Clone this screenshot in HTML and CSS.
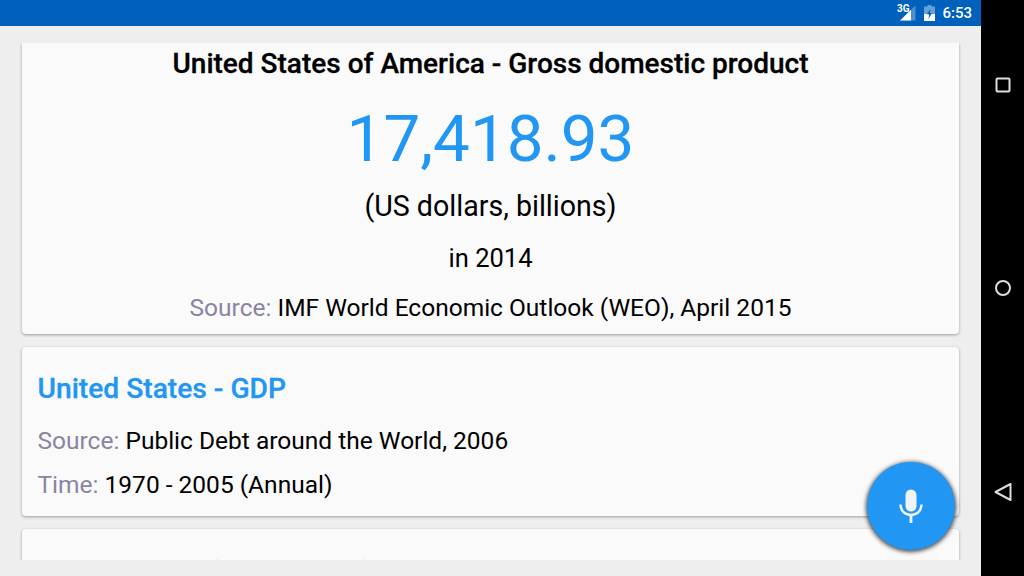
FILE: index.html
```html
<!DOCTYPE html>
<html lang="en">
<head>
    <meta charset="UTF-8">
    <title>GDP search</title>
    <link rel="stylesheet" href="styles.css">
</head>
<body>
    <div class="screen">
        <div class="status-bar">
            <svg class="icon-signal" width="17" height="16" viewBox="0 0 17 16">
                <path d="M16.500 0.500V15.500H1z" fill="#fff" fill-opacity="0.3"/>
                <path d="M12 5V15.500H1z" fill="#fff"/>
            </svg>
            <span class="network">3G</span>
            <svg class="icon-battery" width="11" height="16" viewBox="0 0 11 16">
                <path d="M3.500 0h4v1.500H11V16H0V1.500h3.500z" fill="#fff" fill-opacity="0.4"/>
                <path d="M0 9h11v7H0z" fill="#fff"/>
                <path d="M6.500 3.500 3 9.500h2.200L4.500 14 8 8H5.800z" fill="#0061bc"/>
            </svg>
            <span class="clock">6:53</span>
        </div>

        <div class="results">
            <div class="card card-main">
                <h1 class="main-title">United States of America - Gross domestic product</h1>
                <div class="main-value">17,418.93</div>
                <div class="main-unit">(US dollars, billions)</div>
                <div class="main-year">in 2014</div>
                <div class="main-source"><span class="label">Source:</span> IMF World Economic Outlook (WEO), April 2015</div>
            </div>
            <div class="card card-result">
                <h2 class="result-title">United States - GDP</h2>
                <p class="result-line"><span class="label">Source:</span> Public Debt around the World, 2006</p>
                <p class="result-line"><span class="label">Time:</span> 1970 - 2005 (Annual)</p>
            </div>
            <div class="card card-result card-partial">
                <h2 class="result-title">Ratio of Debt (World Bank)</h2>
            </div>
        </div>

        <button class="fab">
            <svg width="24" height="36" viewBox="0 0 24 36">
                <rect x="6.500" y="0.500" width="11" height="22" rx="5.500" fill="#f1f3f5"/>
                <path d="M1.500 15.500c0 6.500 4.800 10.500 10.500 10.500s10.500-4 10.500-10.500" fill="none" stroke="#f1f3f5" stroke-width="2.400"/>
                <path d="M12 25v9" stroke="#f1f3f5" stroke-width="2.800"/>
            </svg>
        </button>
    </div>

    <div class="nav-bar">
        <svg width="18" height="18" viewBox="0 0 18 18"><rect x="2.500" y="2.500" width="13" height="13" rx="1" fill="none" stroke="#ddd" stroke-width="2"/></svg>
        <svg width="20" height="20" viewBox="0 0 20 20"><circle cx="10" cy="10" r="7" fill="none" stroke="#ddd" stroke-width="2"/></svg>
        <svg width="20" height="22" viewBox="0 0 20 22"><path d="M17.500 3v16L2.500 11z" fill="none" stroke="#ddd" stroke-width="2" stroke-linejoin="round"/></svg>
    </div>
</body>
</html>
```

FILE: styles.css
```css
html, body {
    margin: 0;
    height: 100%;
    overflow: hidden;
}
body {
    display: flex;
    width: 1024px;
    height: 576px;
    font-family: Roboto, sans-serif;
    background-color: #000;
}
.screen {
    position: relative;
    flex: 1;
    display: flex;
    flex-direction: column;
    background-color: #eeeeee;
}
.status-bar {
    height: 26px;
    flex: none;
    display: flex;
    align-items: center;
    justify-content: flex-end;
    padding-right: 9px;
    background-color: #0061bc;
    color: #fff;
}
.icon-signal {
    margin-right: 8px;
}
.network {
    position: absolute;
    top: 3px;
    left: 897px;
    font-size: 10px;
    font-weight: 700;
}
.icon-battery {
    margin-right: 7px;
}
.clock {
    font-size: 15px;
    font-weight: 500;
}
.results {
    height: 517px;
    margin-top: 17px;
    padding: 0 22px;
    overflow: hidden;
}
.card {
    background-color: #fafafa;
    border-radius: 4px;
    box-shadow: 0 1px 3px rgba(0, 0, 0, 0.35);
    margin-bottom: 13px;
}
.card-main {
    height: 291px;
    border-radius: 0 0 4px 4px;
    text-align: center;
    color: #000;
}
.main-title {
    margin: 0;
    padding-top: 3px;
    font-size: 28px;
    line-height: 36px;
    font-weight: 500;
    -webkit-text-stroke: 0.3px #000;
}
.main-value {
    margin-top: 18px;
    font-size: 65.500px;
    line-height: 78px;
    font-weight: 400;
    color: #2196f3;
}
.main-unit {
    margin-top: 10px;
    font-size: 28.600px;
    line-height: 36px;
}
.main-year {
    margin-top: 17px;
    font-size: 25.500px;
    line-height: 34px;
}
.main-source {
    margin-top: 16px;
    font-size: 24.500px;
    line-height: 34px;
}
.label {
    color: #8a84a3;
}
.card-result {
    padding: 24px 15.500px 0;
    height: 169px;
    box-sizing: border-box;
}
.card-partial {
    padding-top: 26px;
}
.result-title {
    margin: 0 0 17px;
    font-size: 28.200px;
    line-height: 36px;
    font-weight: 500;
    color: #2196f3;
    -webkit-text-stroke: 0.3px #2196f3;
}
.result-line {
    margin: 0 0 10px;
    font-size: 24.500px;
    line-height: 34px;
    color: #000;
}
.fab {
    position: absolute;
    left: 867px;
    top: 462px;
    width: 88px;
    height: 88px;
    padding: 2px 0 0;
    box-sizing: border-box;
    border: none;
    border-radius: 50%;
    display: flex;
    align-items: center;
    justify-content: center;
    background-color: #2196f3;
    box-shadow: 0 1px 4px 1px rgba(0, 0, 0, 0.7);
}
.nav-bar {
    width: 43px;
    flex: none;
    height: 576px;
    background-color: #000;
    display: flex;
    flex-direction: column;
    align-items: center;
}
.nav-bar svg:nth-child(1) {
    margin-top: 76px;
}
.nav-bar svg:nth-child(2) {
    margin-top: 184px;
}
.nav-bar svg:nth-child(3) {
    margin-top: 183px;
}
```
